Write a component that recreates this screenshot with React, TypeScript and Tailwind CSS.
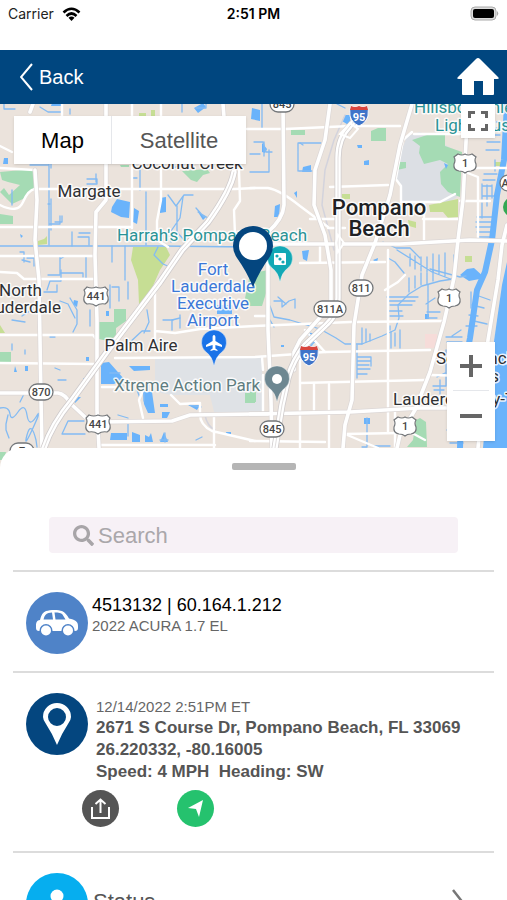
import type { ReactNode } from "react";
import { FaSearch } from "react-icons/fa";

type Point = { x: number; y: number };

const canals = [
  "M0 246H160L250 247L268 247",
  "M49 164V245M49 165H30M12 190V205M51 199V230M60 216V224H50M55 222H62L62 216",
  "M87 179H97V184H87M96 174V182M72 232V246M78 237H89V245M79 233H90",
  "M112 246V262M125 246V280M60 257V275H48M60 273H83V277M60 259L65 256",
  "M24 262V252H20M27 258H34V266M22 260L30 262M140 168V190M137 178H132",
  "M146 192V245M158 247L154 255L163 264L170 267M168 195L176 206L184 195H193",
  "M177 206V232L184 240M183 197L180 218L171 231V242M198 212L208 218M196 208L204 217",
  "M173 168L190 162M40 107L48 112H62M70 109V114M182 104V112M196 108H206V104",
  "M4 104V109H15M51 168V163M50 204H48M86 257V278",
  "M0 290L16 295M12 320L25 322M22 316L30 311M57 285V292H44M61 270V281H50L47 290",
  "M70 298L77 310V324L73 332M60 301L68 304L75 318M90 310V326M110 285V308",
  "M112 287H119V301M128 282V299M147 310L149 322L144 333M163 320H173M180 315V328",
  "M128 344L142 331H150M12 344V350M25 350V354M50 337H55M58 380H66M55 368L60 370",
  "M0 408Q9 406 10 414T18 412T27 415T36 417T33 428T27 435T36 440L37 447",
  "M20 402L24 394H17M8 415L6 424V430L9 438M62 434L68 421H84M62 434H85",
  "M128 420V436M118 415L128 418M137 390L140 398M144 386V401M165 433V442M160 440H168",
  "M196 440L202 437M190 405L201 407M172 330V320L180 318M110 373H120",
  "M262 104V128M254 142H263L266 152H272M250 172H269V150M298 171V143H321M299 171H312",
  "M250 154H260M264 142V156M337 104L345 108M300 143L303 145M383 242L396 248H410L420 258",
  "M397 250L432 272L453 280M410 254V266M415 256V269M421 257V271M427 257V272M433 254V272M439 255V274M445 253V276",
  "M388 258L395 262L404 273M430 269L460 277L466 276M454 255V278M475 240H500",
  "M270 306L274 317L290 320L320 329L336 338L345 344L362 344L382 336L395 330L399 318L398 305L409 294L422 286L440 281L453 279",
  "M387 297H418M388 301H415M390 305H412M388 311H402M390 316H403M390 326V330M391 332V348M395 333V346M400 330V348",
  "M409 292V278M415 288V276M421 285V273M427 284V273M433 281V270M428 285V318H437M426 304L435 298M427 312H440",
  "M357 345V378M362 328V344M366 329V342M370 334V341M357 357H371M357 361H371M357 365H369M357 369H370M357 374H367M371 357V366",
  "M274 301L282 301V307L289 301L295 299V308M278 297L286 304M270 320L274 327M310 348L318 335M309 343L314 351",
  "M367 418V447H362M373 446H390M446 350V386M433 386H446M434 390H444M437 377L445 373M440 380V394",
  "M500 122H488M501 128H487M500 135H488M500 142H487M499 150H486M497 174H484M495 180H483M482 184V199M487 185V206M492 185V198M482 186H492M482 196H494",
  "M493 217H477M492 222H476M491 227H476M490 232H477M490 237H479M482 203V218M495 160V171M471 292V308M466 326H477M469 315L478 316M462 337H446M462 342H447M462 347H448M461 330L452 336",
  "M472 305L484 308M476 295L490 300M474 321L487 324M463 430H447M463 436H448M463 443H450",
];

const lakes = [
  "M51 106H63V103H52ZM112 207L117 199L130 202L129 218L121 217L111 212ZM134 208L139 211L137 224L133 222Z",
  "M160 198L166 197V212L160 213ZM194 108L203 103L206 107L198 113ZM4 158H8V164H3ZM198 212L206 217L203 220Z",
  "M101 363L109 362L124 379L114 384L101 384ZM129 366H150V370L134 371ZM143 392L152 392L155 413H148L144 404Z",
  "M111 433H127V440H110ZM132 432L140 435V442H132ZM145 435L149 437L151 433L153 442H145ZM160 442L164 432L168 442Z",
  "M160 404H168V407H160ZM162 412H170L167 418H162ZM188 405H200L197 410ZM217 305H232V314H217ZM106 311H109V316H106Z",
  "M74 300L78 301L77 307L73 304ZM86 357H89V361H86ZM25 366H28V371H25ZM72 397H81L75 403ZM226 432H231V435H227Z",
  "M252 108L260 110V121L251 119ZM262 143L267 149L265 153L262 152ZM303 167L311 165V172H302ZM275 206L280 204L279 217L274 217ZM294 193L297 191V198Z",
  "M345 115H350V126L342 121ZM357 145H362V148H358ZM364 161L369 160V165H364ZM302 251L309 250L307 261L303 259ZM373 260L378 258L377 263ZM310 338L316 342L311 345ZM306 332L317 334L311 339Z",
  "M364 418H370V424H364ZM444 163L448 165L446 169ZM460 275L467 269L474 268L485 278L469 281ZM425 314H429V319H425Z",
  "M281 345H284V347H281ZM20 234L23 236L21 238ZM83 378H87V381H83ZM15 366L17 372H14Z",
];

const parks = [
  "M0 172L22 170L34 170V188L23 199L12 204L0 192L4 188L9 195L20 185L8 182L2 180Z",
  "M0 214L13 216V224H0ZM182 171L207 169L210 173L203 175L197 182L191 180ZM120 165H129V167H121Z",
  "M114 309H126V321L116 328V336L108 341L99 339V322H114ZM0 352H11V362H0Z",
  "M291 130H305V135H291ZM371 131L378 128H386V141H371ZM397 162H406V168L397 170Z",
  "M412 140L430 134H445V146L462 152L460 197L448 192L441 184L440 172L448 164L440 160L424 164L419 153L420 146Z",
  "M250 274L268 270L267 290L262 306H250L244 303ZM245 393H255V403H245ZM250 392H256V402H250Z",
  "M420 418L426 422L427 447L407 447L413 440L416 420ZM0 452L6 452L4 460H0Z",
];

const lawns = [
  "M133 247H166L170 255L160 270L145 304H139L138 280L131 260Z",
  "M38 241L44 239L47 236V244L38 245ZM342 194H350V199H342ZM429 205L458 199V217L448 218L443 212H430Z",
  "M408 220L416 222V228L409 226ZM465 256H472V262H465ZM0 325L5 333H0ZM151 110H155V116H151ZM139 113H146V118H139ZM495 162H502V166H495Z",
];

const minorRoads = [
  "M0 227H131M0 256H93M0 272L17 273L24 279H95M0 335H93L97 340M0 363L95 364M0 146L12 152",
  "M0 168L34 170M0 205Q18 214 23 202T35 189M34 189H235L255 188M132 104V228M161 104V200L157 221V240L168 247",
  "M62 104V116M107 135L132 130M247 129L285 129L350 126H400M250 188H268Q280 190 300 206L328 227M330 187L388 185",
  "M395 178L401 186V202H440L455 194M414 134H460M310 219H336M328 228H345M365 226H380M300 263L385 262M320 244V262",
  "M155 290V350M155 331L175 333L200 329L255 326L350 322L444 321M115 358L255 357L325 352L430 350M143 390L139 400L143 418",
  "M102 387H116M100 445H215M214 415V448M200 414Q200 425 212 431L255 441M171 395L180 404L200 403V414M300 383L425 380",
  "M300 353V448M314 383V412M329 384V448M345 434L400 433M345 434L378 448M388 250V432M424 203L424 240M423 219H458M465 172L478 177V240",
  "M412 132L403 140L396 178M268 316H255M250 441L325 442M263 412V375M262 357L263 370M385 290L398 282L405 275M430 375L470 376",
  "M457 168H507M460 201H490M239 170L240 201L234 210L235 235M305 330L325 352M412 433L425 440M395 409V448M62 393L75 408L84 417",
];

const roads = [
  "M33 104L30 112M35 170L37 200L35 240L39 280L41 400L42 448",
  "M106 104V200L96 212L95 255L97 320L97 410L99 448",
  "M0 393H58Q65 394 70 403L85 417M99 422L172 421L190 415L255 414L350 412L420 408H450",
  "M283 104L284 205Q283 219 268 232L268 330L271 400L272 448",
  "M330 104L325 140L315 170L314 205L325 235L331 270V305L300 340L294 352V370",
  "M412 104L400 145L390 195L375 243L362 275L354 325L352 400L345 425L343 448",
  "M468 104L463 200L458 240L454 278L444 322L430 372L415 410L400 435L397 448",
  "M240 244H400L470 240L507 241M223 104L225 130L234 172M250 414H268",
  "M507 225L502 245L498 280L488 340L478 448",
];

const highways = [
  "M234 172Q231 190 208 222L182 250L160 282L112 345L72 400Q52 424 44 448",
  "M362 112L350 126Q338 138 338 158V298Q338 315 325 326L305 345Q293 360 288 378L282 405L275 448",
];

const Lines = ({
  paths,
  color,
  width,
}: {
  paths: string[];
  color: string;
  width: number;
}) => (
  <g
    fill="none"
    stroke={color}
    strokeWidth={width}
    strokeLinejoin="round"
    strokeLinecap="round"
  >
    {paths.map((d) => (
      <path key={d} d={d} />
    ))}
  </g>
);

const Areas = ({ paths, color }: { paths: string[]; color: string }) => (
  <g fill={color}>
    {paths.map((d) => (
      <path key={d} d={d} />
    ))}
  </g>
);

const PlaceLabel = ({
  x,
  y,
  size = 17,
  color = "#2f3033",
  weight = 400,
  anchor = "middle",
  children,
}: Point & {
  size?: number;
  color?: string;
  weight?: number;
  anchor?: "start" | "middle" | "end";
  children: ReactNode;
}) => (
  <text
    x={x}
    y={y}
    fontSize={size}
    fontWeight={weight}
    fill={color}
    textAnchor={anchor}
    stroke="#fff"
    strokeWidth={3}
    strokeOpacity={0.85}
    strokeLinejoin="round"
    paintOrder="stroke"
  >
    {children}
  </text>
);

const RouteOval = ({ x, y, label }: Point & { label: string }) => {
  const half = label.length > 3 ? 16 : 12;
  return (
    <g transform={`translate(${x} ${y})`}>
      <rect
        x={-half}
        y={-8}
        width={half * 2}
        height={16}
        rx={8}
        fill="#fff"
        stroke="#74777a"
        strokeWidth={1.3}
      />
      <text y={4} fontSize={11} fontWeight={500} fill="#444" textAnchor="middle">
        {label}
      </text>
    </g>
  );
};

const UsShield = ({ x, y, label }: Point & { label: string }) => {
  const wide = label.length > 1;
  return (
    <g transform={`translate(${x} ${y})`}>
      <path
        d={
          wide
            ? "M-9 -9Q-4 -7 0 -9Q4 -7 9 -9L12 -6Q10 -3 12 1Q13 6 9 8Q4 7 0 10Q-4 7 -9 8Q-13 6 -12 1Q-10 -3 -12 -6Z"
            : "M-7 -9Q-3 -7 0 -9Q3 -7 7 -9L11 -6Q9 -3 11 1Q12 7 6 8Q2 8 0 10Q-2 8 -6 8Q-12 7 -11 1Q-9 -3 -11 -6Z"
        }
        fill="#fff"
        stroke="#74777a"
        strokeWidth={1.2}
      />
      <text y={4} fontSize={11} fontWeight={500} fill="#444" textAnchor="middle">
        {label}
      </text>
    </g>
  );
};

const InterstateShield = ({ x, y }: Point) => (
  <g transform={`translate(${x} ${y})`}>
    <path
      d="M-8 -10Q-4 -8 0 -10Q4 -8 8 -10Q10 -6 9 0Q7 7 0 10Q-7 7 -9 0Q-10 -6 -8 -10Z"
      fill="#3f74c9"
      stroke="#fff"
      strokeWidth={1}
    />
    <path d="M-8 -10Q-4 -8 0 -10Q4 -8 8 -10L9 -6H-9Z" fill="#d9453d" />
    <text y={5} fontSize={11} fontWeight={700} fill="#fff" textAnchor="middle">
      95
    </text>
  </g>
);

const PoiPin = ({
  x,
  y,
  color,
  children,
}: Point & { color: string; children: ReactNode }) => (
  <g transform={`translate(${x} ${y})`}>
    <path
      d="M0 23Q-2 13 -8 9A12.5 12.5 0 1 1 8 9Q2 13 0 23Z"
      fill={color}
      stroke="#fff"
      strokeOpacity={0.5}
      strokeWidth={0.8}
    />
    {children}
  </g>
);

const MapCanvas = () => (
  <svg
    viewBox="0 104 507 366"
    preserveAspectRatio="xMidYMid slice"
    className="block h-full w-full font-[Roboto,sans-serif]"
    role="img"
    aria-label="Map of Pompano Beach"
  >
    <rect x={0} y={104} width={507} height={366} fill="#ebe3dc" />
    <path
      d="M398 160L407 136L420 132L455 150L458 196L450 202H402V188L395 178Z"
      fill="#dcdfe4"
    />
    <path
      d="M155 358L262 356L263 412H214L210 395H172L155 392ZM245 357H262V395H245Z"
      fill="#dfe2e6"
    />
    <path d="M425 334H437V348H425Z" fill="#f6dcd9" />
    <Areas paths={parks} color="#a5dbb4" />
    <Areas paths={lawns} color="#c6de94" />
    <Areas paths={lakes} color="#6ab3fb" />
    <Lines paths={canals} color="#83bbf3" width={1.3} />
    <Lines
      paths={["M507 104L504 160L497 195L492 240L485 272L477 290L470 338L462 380L460 448"]}
      color="#6ab3fb"
      width={6}
    />
    <path d="M507 262L502 285L497 320L490 370L483 448V470H507Z" fill="#6ab3fb" />
    <Lines
      paths={["M345 115L334 140L325 170L322 205L334 250", "M205 415Q207 426 215 430"]}
      color="#d3d3dc"
      width={1.5}
    />
    <Lines paths={minorRoads} color="#fff" width={2.4} />
    <Lines paths={roads} color="#dcd7d6" width={5} />
    <Lines paths={roads} color="#fff" width={3.6} />
    <Lines paths={highways} color="#cfcbcc" width={7} />
    <Lines paths={highways} color="#fff" width={5.4} />
    <Lines paths={highways} color="#d9d6d6" width={0.8} />
    <path
      d="M336 243L338 235L344 243L338 252ZM340 134L350 123L358 129L350 138Z"
      fill="none"
      stroke="#fff"
      strokeWidth={2}
    />

    <PlaceLabel x={187} y={169}>Coconut Creek</PlaceLabel>
    <PlaceLabel x={89} y={197}>Margate</PlaceLabel>
    <PlaceLabel x={212} y={241} color="#2a9396">Harrah's Pompano Beach</PlaceLabel>
    <PlaceLabel x={379} y={215} size={22} weight={500} color="#202124">Pompano</PlaceLabel>
    <PlaceLabel x={379} y={236} size={22} weight={500} color="#202124">Beach</PlaceLabel>
    <PlaceLabel x={414} y={113} anchor="start" color="#2a9396">Hillsboro Inlet</PlaceLabel>
    <PlaceLabel x={435} y={131} anchor="start" color="#2a9396">Lighthouse</PlaceLabel>
    <PlaceLabel x={213} y={275} color="#3b78d8">Fort</PlaceLabel>
    <PlaceLabel x={213} y={292} color="#3b78d8">Lauderdale</PlaceLabel>
    <PlaceLabel x={213} y={309} color="#3b78d8">Executive</PlaceLabel>
    <PlaceLabel x={213} y={326} color="#3b78d8">Airport</PlaceLabel>
    <PlaceLabel x={-1} y={296} anchor="start">North</PlaceLabel>
    <PlaceLabel x={61} y={313} anchor="end">Lauderdale</PlaceLabel>
    <PlaceLabel x={141} y={351}>Palm Aire</PlaceLabel>
    <PlaceLabel x={114} y={391} anchor="start" color="#607d80">Xtreme Action Park</PlaceLabel>
    <PlaceLabel x={436} y={364} anchor="start">Sea Ranch</PlaceLabel>
    <PlaceLabel x={499} y={382} anchor="end">Lakes</PlaceLabel>
    <PlaceLabel x={393} y={405} anchor="start">Lauderdale-By-The-Sea</PlaceLabel>

    <RouteOval x={282} y={104} label="845" />
    <RouteOval x={361} y={288} label="811" />
    <RouteOval x={330} y={309} label="811A" />
    <RouteOval x={41} y={392} label="870" />
    <RouteOval x={272} y={429} label="845" />
    <RouteOval x={22} y={451} label="7" />
    <RouteOval x={512} y={183} label="A1A" />
    <UsShield x={96} y={296} label="441" />
    <UsShield x={98} y={424} label="441" />
    <UsShield x={465} y={163} label="1" />
    <UsShield x={449} y={298} label="1" />
    <UsShield x={405} y={426} label="1" />
    <InterstateShield x={359} y={116} />
    <InterstateShield x={309} y={356} />
    <circle cx={513} cy={207} r={10} fill="#34a853" />

    <PoiPin x={214} y={343} color="#1a73e8">
      <path
        d="M0 -8C1 -8 1.4 -7 1.4 -6V-2L8 2V4L1.4 2V5.500L3.500 7V8L0 7L-3.500 8V7L-1.400 5.500V2L-8 4V2L-1.400 -2V-6C-1.400 -7 -1 -8 0 -8Z"
        fill="#fff"
      />
    </PoiPin>
    <PoiPin x={277} y={379} color="#6d8791">
      <circle r={5} fill="#fff" />
    </PoiPin>
    <PoiPin x={280} y={259} color="#12a8b5">
      <rect x={-6} y={-6} width={12} height={12} rx={1} fill="#fff" />
      <g fill="#12a8b5">
        <circle cx={-3} cy={-3} r={1.6} />
        <circle r={1.6} />
        <circle cx={3} cy={3} r={1.6} />
      </g>
    </PoiPin>
    <path
      d="M253 287Q247 272 237 258Q233 252 233 246A20 20 0 0 1 273 246Q273 252 269 258Q259 272 253 287Z"
      fill="#04467f"
    />
    <circle cx={253} cy={246} r={14} fill="#fff" />
  </svg>
);

const StatusBar = () => (
  <div className="grid h-[50px] shrink-0 grid-cols-3 items-start px-2 pt-1 font-[Inter,sans-serif] text-sm text-[#222]">
    <div className="flex items-center gap-2">
      <span>Carrier</span>
      <svg width="19" height="15" viewBox="0 0 19 15" fill="none" stroke="#000">
        <path d="M1.500 5.500Q9.500 -2 17.500 5.500" strokeWidth="2.600" />
        <path d="M4.500 9Q9.500 4 14.500 9" strokeWidth="2.600" />
        <path d="M9.500 14L6.500 10.800Q9.500 8.200 12.500 10.800Z" fill="#000" stroke="none" />
      </svg>
    </div>
    <span className="text-center font-semibold text-black">2:51 PM</span>
    <svg width="29" height="15" viewBox="0 0 29 15" className="mt-0.5 justify-self-end">
      <rect x="1" y="1" width="25" height="13" rx="4" fill="#ddd" stroke="#aaa" strokeWidth="1" />
      <rect x="3" y="3" width="21" height="9" rx="2" fill="#000" />
      <path d="M27 5Q29.500 7.500 27 10Z" fill="#aaa" />
    </svg>
  </div>
);

const NavBar = () => (
  <header className="flex h-[54px] shrink-0 items-center justify-between bg-[#00467f] pr-2 pl-5 text-white">
    <button type="button" className="flex items-center gap-1.5 text-xl">
      <svg width="13" height="28" viewBox="0 0 13 28" fill="none" stroke="currentColor" strokeWidth="2">
        <path d="M12 1L1 14L12 27" />
      </svg>
      Back
    </button>
    <button type="button" aria-label="Home">
      <svg width="42" height="38" viewBox="0 0 42 38" fill="currentColor">
        <path d="M21 0Q22 0 23 1L41 19Q43 21 40 21H37V36Q37 37 36 37H26V23H17V37H6Q5 37 5 36V21H2Q-1 21 1 19L19 1Q20 0 21 0Z" />
      </svg>
    </button>
  </header>
);

const MapControls = () => (
  <>
    <div className="absolute top-3 left-[14px] flex h-12 bg-white text-[22px] shadow-sm">
      <button type="button" className="w-[98px] border-r border-gray-200 text-black">
        Map
      </button>
      <button type="button" className="w-[134px] text-[#565656]">
        Satellite
      </button>
    </div>
    <button
      type="button"
      aria-label="Toggle fullscreen"
      className="absolute top-0 right-3 flex h-[34px] w-[34px] items-center justify-center bg-white shadow-sm"
    >
      <svg width="20" height="20" viewBox="0 0 20 20" fill="none" stroke="#666" strokeWidth="3">
        <path d="M1.500 7V1.500H7M13 1.500H18.500V7M18.500 13V18.500H13M7 18.500H1.500V13" />
      </svg>
    </button>
    <div className="absolute top-[238px] right-3 flex w-12 flex-col bg-white px-1.5 shadow-sm">
      <button
        type="button"
        aria-label="Zoom in"
        className="flex h-[49px] items-center justify-center border-b border-gray-200"
      >
        <svg width="22" height="22" viewBox="0 0 22 22" stroke="#666" strokeWidth="4">
          <path d="M0 11H22M11 0V22" />
        </svg>
      </button>
      <button type="button" aria-label="Zoom out" className="flex h-[50px] items-center justify-center">
        <svg width="22" height="4" viewBox="0 0 22 4" stroke="#666" strokeWidth="4">
          <path d="M0 2H22" />
        </svg>
      </button>
    </div>
  </>
);

const CarIcon = () => (
  <svg width="44" height="28" viewBox="0 0 44 28">
    <path
      d="M1 17C1 13 2 11.500 5 11C6 6 8 3 11 2C15 0.500 24 0.500 27 2C30 3.500 32 6 34 9.500C40 10.500 43 12.500 43 17V19Q43 22 40 22H4Q1 22 1 19Z"
      fill="#fff"
    />
    <path
      d="M8.500 10.500C9.500 6.500 11 4.500 13.500 4L17 3.500L18 10.500ZM19.500 3.500C24 3.500 26 4 27.500 5.500L30.500 10.500H20.500Z"
      fill="#4f83c8"
    />
    <circle cx="11" cy="21.500" r="6.500" fill="#4f83c8" />
    <circle cx="33" cy="21.500" r="6.500" fill="#4f83c8" />
    <circle cx="11" cy="21.500" r="5" fill="#fff" />
    <circle cx="33" cy="21.500" r="5" fill="#fff" />
  </svg>
);

const VehicleRow = () => (
  <section className="flex h-[101px] gap-1 border-t-2 border-[#dcdcdc] pt-5 pl-[13px]">
    <div className="flex h-[62px] w-[62px] shrink-0 items-center justify-center rounded-full bg-[#4f83c8]">
      <CarIcon />
    </div>
    <div className="pt-0.5">
      <h1 className="text-lg leading-[22px] text-black">4513132 | 60.164.1.212</h1>
      <p className="text-[15px] leading-5 text-[#666]">2022 ACURA 1.7 EL</p>
    </div>
  </section>
);

const LocationRow = () => (
  <section className="flex h-[180px] gap-2 border-t-2 border-[#dcdcdc] pt-5 pl-[13px]">
    <div className="flex h-[62px] w-[62px] shrink-0 items-center justify-center rounded-full bg-[#04467f]">
      <svg width="28" height="42" viewBox="0 0 28 42">
        <path
          d="M14 42Q9 30 3 21Q0 17 0 14A14 14 0 0 1 28 14Q28 17 25 21Q19 30 14 42ZM14 5A9 9 0 1 0 14 23A9 9 0 1 0 14 5Z"
          fill="#fff"
          fillRule="evenodd"
        />
      </svg>
    </div>
    <div className="pt-1">
      <p className="text-[15px] leading-5 text-[#666]">12/14/2022 2:51PM ET</p>
      <div className="text-[17px] leading-[22px] font-bold text-[#555]">
        <p>2671 S Course Dr, Pompano Beach, FL 33069</p>
        <p>26.220332, -80.16005</p>
        <p className="whitespace-pre">Speed: 4 MPH  Heading: SW</p>
      </div>
      <div className="-ml-3.5 flex gap-[58px] pt-[7px]">
        <button
          type="button"
          aria-label="Share"
          className="flex h-[37px] w-[37px] items-center justify-center rounded-full bg-[#555]"
        >
          <svg width="19" height="22" viewBox="0 0 19 22" fill="none" stroke="#fff" strokeWidth="2">
            <path d="M1 9V20H18V9M9.500 15V1.500M4.500 6L9.500 1.500L14.500 6" />
          </svg>
        </button>
        <button
          type="button"
          aria-label="Navigate"
          className="flex h-[37px] w-[37px] items-center justify-center rounded-full bg-[#25c26e]"
        >
          <svg width="16" height="17" viewBox="0 0 16 17" fill="#fff">
            <path d="M15 0L0 8L8 9L11 17Z" />
          </svg>
        </button>
      </div>
    </div>
  </section>
);

const StatusRow = () => (
  <section className="border-t-2 border-[#dcdcdc] pt-5">
    <button type="button" className="flex w-full items-center gap-[5px] pr-7 pl-[13px] text-left">
      <span className="flex h-[62px] w-[62px] shrink-0 items-start justify-center rounded-full bg-[#06aeef] pt-4">
        <svg width="32" height="34" viewBox="0 0 32 34" fill="#fff">
          <circle cx="16" cy="7" r="6.500" />
          <path d="M5 32Q5 17 16 17T27 32Z" />
        </svg>
      </span>
      <span className="grow pb-1.5 text-[22px] text-[#555]">Status</span>
      <svg width="14" height="30" viewBox="0 0 14 30" fill="none" stroke="#777" strokeWidth="2.500">
        <path d="M1 1L12 15L1 29" />
      </svg>
    </button>
  </section>
);

const App = () => (
  <main className="flex h-screen flex-col overflow-hidden bg-white font-['Liberation_Sans',Arial,sans-serif]">
    <StatusBar />
    <NavBar />
    <div className="relative h-[366px] shrink-0">
      <MapCanvas />
      <MapControls />
    </div>
    <div className="relative -mt-[22px] min-h-0 grow overflow-hidden rounded-tl-[20px] bg-white px-[13px]">
      <div className="flex justify-center pt-[15px] pl-5">
        <div className="h-[7px] w-16 rounded-xs bg-[#b5b5b5]" />
      </div>
      <label className="mx-9 mt-[47px] mb-[17px] flex h-9 items-center gap-1 rounded-sm bg-[#f7f1f6] pl-6">
        <FaSearch size={21} color="#a8a5a8" />
        <input
          type="search"
          aria-label="Search"
          placeholder="Search"
          className="min-w-0 grow bg-transparent text-[22px] outline-none placeholder:text-[#aaa7aa]"
        />
      </label>
      <VehicleRow />
      <LocationRow />
      <StatusRow />
    </div>
  </main>
);

export default App;
